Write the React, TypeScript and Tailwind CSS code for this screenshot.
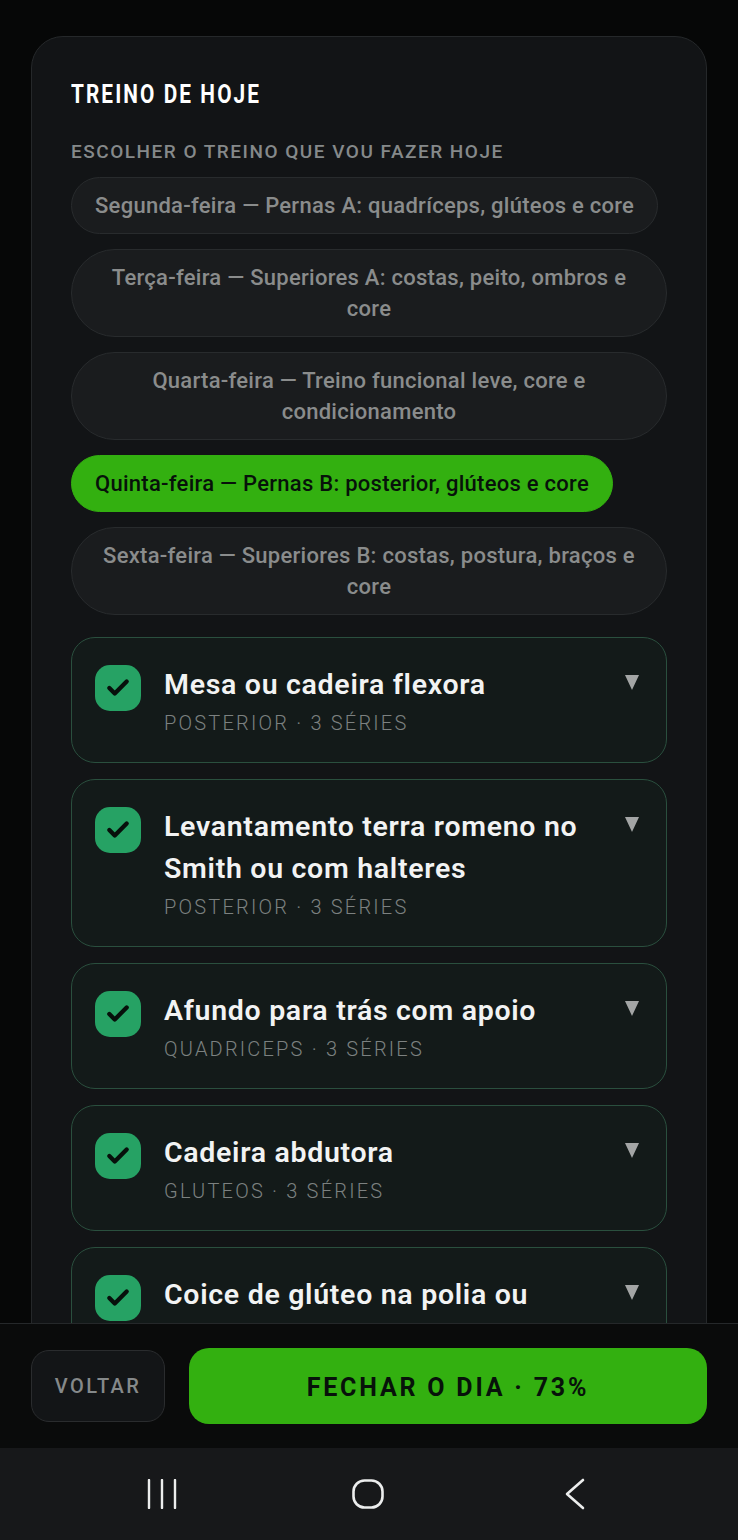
import { Check } from 'lucide-react'

const days = [
  { label: 'Segunda-feira — Pernas A: quadríceps, glúteos e core' },
  { label: 'Terça-feira — Superiores A: costas, peito, ombros e core' },
  { label: 'Quarta-feira — Treino funcional leve, core e condicionamento' },
  { label: 'Quinta-feira — Pernas B: posterior, glúteos e core', active: true },
  { label: 'Sexta-feira — Superiores B: costas, postura, braços e core' },
]

const exercises: { name: string; meta?: string }[] = [
  { name: 'Mesa ou cadeira flexora', meta: 'POSTERIOR · 3 SÉRIES' },
  { name: 'Levantamento terra romeno no Smith ou com halteres', meta: 'POSTERIOR · 3 SÉRIES' },
  { name: 'Afundo para trás com apoio', meta: 'QUADRICEPS · 3 SÉRIES' },
  { name: 'Cadeira abdutora', meta: 'GLUTEOS · 3 SÉRIES' },
  { name: 'Coice de glúteo na polia ou' },
]

function ExerciseCard({ name, meta }: { name: string; meta?: string }) {
  return (
    <div className="flex shrink-0 items-start rounded-[24px] border border-[#2a4f3e] bg-[#131a19] pl-[23px] pr-[27px] pt-[26px] pb-[27px]">
      <div className="mt-[1px] flex h-[46px] w-[46px] shrink-0 items-center justify-center rounded-[15px] bg-[#26a264]">
        <Check className="h-[26px] w-[26px] text-[#07100b]" strokeWidth={4} />
      </div>
      <div className="ml-[23px] min-w-0 flex-1">
        <div className="text-[28.5px] leading-[42px] font-semibold tracking-[0.7px] text-[#f2f3f3]">{name}</div>
        {meta && <div className="mt-[5px] text-[20px] leading-[24px] font-light tracking-[2.2px] text-[#7c8180]">{meta}</div>}
      </div>
      <div className="ml-[24px] mt-[11px] h-0 w-0 shrink-0 border-x-[7px] border-t-[15px] border-x-transparent border-t-[#a3a5a5]" />
    </div>
  )
}

export default function App() {
  return (
    <div className="flex h-[1540px] w-[738px] flex-col overflow-hidden bg-[#060707] font-['Roboto',sans-serif]">
      <div className="min-h-0 flex-1 overflow-hidden px-[31px] pt-[36px]">
        <div className="rounded-[32px] border border-[#25282a] bg-[#121416] px-[39px] pt-[41px] pb-[40px]">
          <h1 className="origin-left scale-x-[0.8] text-[26px] leading-[32px] font-bold tracking-[2.6px] text-white">TREINO DE HOJE</h1>
          <div className="mt-[31px] text-[19px] leading-[22px] font-medium tracking-[1.5px] text-[#85898a]">
            ESCOLHER O TREINO QUE VOU FAZER HOJE
          </div>
          <div className="mt-[14px] flex flex-wrap gap-[15px]">
            {days.map((d) => (
              <div
                key={d.label}
                className={
                  d.active
                    ? 'rounded-full border border-[#33b010] bg-[#33b010] px-[23px] py-[12px] text-center text-[22px] leading-[31px] font-medium tracking-[0.27px] text-[#07120a]'
                    : 'rounded-full border border-[#282b2d] bg-[#1a1c1e] px-[23px] py-[12px] text-center text-[22px] leading-[31px] font-medium tracking-[0.27px] text-[#8a8c8c]'
                }
              >
                {d.label}
              </div>
            ))}
          </div>
          <div className="mt-[22px] flex flex-col gap-[16px]">
            {exercises.map((e) => (
              <ExerciseCard key={e.name} {...e} />
            ))}
          </div>
        </div>
      </div>

      <div className="flex h-[125px] shrink-0 items-center gap-[24px] border-t border-[#25282a] bg-[#0a0b0b] px-[31px]">
        <button className="h-[72px] w-[134px] shrink-0 rounded-[18px] border border-[#2a2c2e] bg-[#131517] text-[20px] font-medium tracking-[2.4px] text-[#85898a]">
          VOLTAR
        </button>
        <button className="h-[76px] flex-1 rounded-[20px] bg-[#33b010] pt-[3px] text-[25px] font-bold tracking-[2.8px] text-[#07120a]">
          FECHAR O DIA · 73%
        </button>
      </div>

      <div className="flex h-[92px] shrink-0 items-center bg-[#17181a] pl-[147px]">
        <svg width="30" height="30" viewBox="0 0 30 30" fill="none" stroke="#eceded" strokeWidth="2.4" strokeLinecap="round">
          <path d="M2 1v28M15 1v28M28 1v28" />
        </svg>
        <svg className="ml-[175px]" width="32" height="30" viewBox="0 0 32 30" fill="none" stroke="#eceded" strokeWidth="2.6">
          <rect x="1.5" y="1.5" width="29" height="27" rx="11" />
        </svg>
        <svg className="ml-[180px]" width="22" height="32" viewBox="0 0 22 32" fill="none" stroke="#eceded" strokeWidth="2.6" strokeLinecap="round" strokeLinejoin="round">
          <path d="M19 2L3 16l16 14" />
        </svg>
      </div>
    </div>
  )
}
